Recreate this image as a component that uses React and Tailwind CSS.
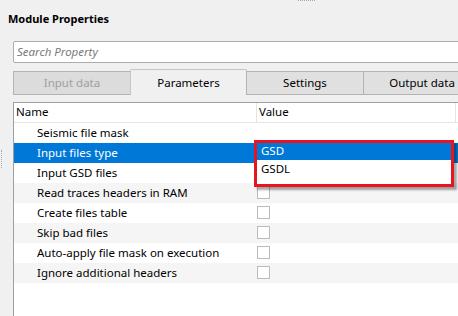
import React from "react";

const rows = [
  { name: "Seismic file mask", box: false },
  { name: "Input files type", selected: true },
  { name: "Input GSD files", box: true, checked: true },
  { name: "Read traces headers in RAM", box: true },
  { name: "Create files table", box: true },
  { name: "Skip bad files", box: true },
  { name: "Auto-apply file mask on execution", box: true },
  { name: "Ignore additional headers", box: true },
];

const Tab = ({ label, active, disabled, w }) =>
  active ? (
    <div
      className="h-[26px] -ml-px shrink-0 flex items-center justify-center border border-b-0 border-[#c4c4c4] rounded-t-[2px] bg-[#f0f0f0]"
      style={{ width: w }}
    >
      {label}
    </div>
  ) : (
    <div
      className={`mt-[2px] h-[24px] -ml-px first:ml-0 shrink-0 flex items-center justify-center border border-[#b4b4b4] ${
        disabled ? "text-[#a0a0a0] bg-[#dcdcdc]" : "bg-[#e0e0e0]"
      }`}
      style={{ width: w }}
    >
      {label}
    </div>
  );

export default function App() {
  return (
    <div className="relative w-[458px] h-[316px] overflow-hidden bg-[#f0f0f0] text-[11.5px] leading-[16px] text-black font-['Segoe_UI','Noto_Sans',sans-serif] flex flex-col">
      {/* splitter grips */}
      <div className="absolute left-[298px] top-0 w-[17px] border-t border-dotted border-[#a8a8a8]" />
      <div className="absolute left-[1px] top-[150px] h-[18px] border-l border-dotted border-[#a8a8a8]" />

      <div className="pl-[8px] pt-[11px] h-[41px] font-bold text-[11px]">Module Properties</div>

      <div className="ml-[13px] h-[22px] w-[460px] shrink-0 border border-[#adadad] rounded-l-[2px] bg-white flex items-center pl-[3px] italic text-[#7a7a7a]">
        Search Property
      </div>

      {/* tabs */}
      <div className="mt-[6px] ml-[13px] h-[26px] flex items-start shrink-0">
        <Tab label="Input data" disabled w={118} />
        <Tab label="Parameters" active w={117} />
        <Tab label="Settings" w={118} />
        <Tab label="Output data" w={118} />
      </div>

      {/* property table */}
      <div className="mt-[7px] ml-[13px] flex-1 border-l border-t border-[#a0a0a0] bg-white">
        <div className="h-[20px] flex border-b border-[#e5e5e5]">
          <div className="w-[243px] border-r border-[#e5e5e5] pl-[2px] pb-px flex items-center">Name</div>
          <div className="flex-1 pl-[2px] pb-px flex items-center border-r border-[#e5e5e5] mr-[2px]">Value</div>
        </div>
        {rows.map((r, i) => (
          <div
            key={r.name}
            className={`h-[20px] flex ${
              r.selected ? "bg-[#0078d7] text-white" : i % 2 === 1 ? "bg-[#f5f5f5]" : "bg-white"
            }`}
          >
            <div className="w-[243px] pl-[23px] pb-px flex items-center">{r.name}</div>
            <div className="flex-1 pt-[3px]">
              {r.box && (
                <div
                  className={`w-[13px] h-[13px] border border-[#bcbcbc] ${
                    r.checked ? "bg-[#1f4e8c] rounded-[2px]" : "bg-white"
                  }`}
                />
              )}
            </div>
          </div>
        ))}
      </div>

      {/* open combo popup */}
      <div className="absolute left-[254px] top-[140px] w-[200px] h-[47px] border-[3px] border-[#e8141f] bg-white shadow-[3px_3px_2px_rgba(0,0,0,0.35)] flex flex-col">
        <div className="h-[17px] bg-[#0078d7] text-white pl-[4px] pb-px flex items-center">GSD</div>
        <div className="h-[19px] pl-[4px] pb-px flex items-center">GSDL</div>
      </div>
    </div>
  );
}
